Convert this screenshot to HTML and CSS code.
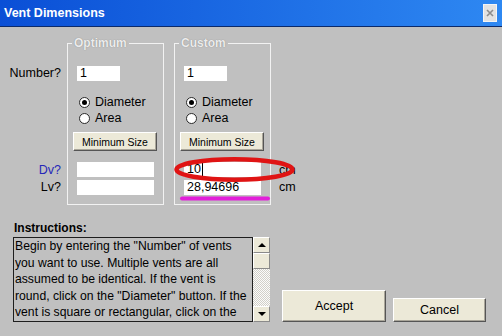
FILE: index.html
```html
<!DOCTYPE html>
<html>
<head>
    <meta charset="UTF-8">
    <title>Vent Dimensions</title>
    <link rel="stylesheet" href="styles.css">
</head>
<body>
    <div class="titlebar">
        <span>Vent Dimensions</span>
        <span class="close">
            <svg width="8" height="8" viewBox="0 0 8 8"><path d="M1 1L7 7M7 1L1 7" stroke="#8c8c8c" stroke-width="1.6"/></svg>
        </span>
    </div>

    <div class="top">
        <fieldset class="group col-opt"><legend>Optimum</legend></fieldset>
        <fieldset class="group col-cus"><legend>Custom</legend></fieldset>

        <div class="lbl row-num">Number?</div>
        <div class="input num col-opt row-num">1</div>
        <div class="input num col-cus row-num">1</div>

        <div class="radio col-opt row-dia"><span class="dot on"></span>Diameter</div>
        <div class="radio col-opt row-area"><span class="dot"></span>Area</div>
        <div class="radio col-cus row-dia"><span class="dot on"></span>Diameter</div>
        <div class="radio col-cus row-area"><span class="dot"></span>Area</div>

        <button class="btn minsize col-opt row-btn">Minimum Size</button>
        <button class="btn minsize col-cus row-btn">Minimum Size</button>

        <div class="lbl blue row-dv">Dv?</div>
        <div class="input wide col-opt row-dv"></div>
        <div class="input wide col-cus row-dv">10<span class="caret"></span></div>
        <div class="unit row-dv">cm</div>

        <div class="lbl row-lv">Lv?</div>
        <div class="input wide col-opt row-lv"></div>
        <div class="input wide col-cus row-lv">28,94696</div>
        <div class="unit row-lv">cm</div>

        <svg class="marks" width="128" height="52" viewBox="0 0 128 52">
            <ellipse cx="62.5" cy="16.5" rx="58" ry="10.2" fill="none" stroke="#e01414" stroke-width="4.5"/>
            <line x1="10" y1="45.5" x2="96" y2="45.5" stroke="#e21fd9" stroke-width="4" stroke-linecap="round"/>
        </svg>
    </div>

    <div class="bottom">
        <div class="instr">
            <h2>Instructions:</h2>
            <div class="textbox">
                <div class="text">Begin by entering the "Number" of vents you want to use. Multiple vents are all assumed to be identical. If the vent is round, click on the "Diameter" button. If the vent is square or rectangular, click on the</div>
                <div class="scroll">
                    <div class="sbtn"><span class="arrow up"></span></div>
                    <div class="sbtn thumb"></div>
                    <div class="track"></div>
                    <div class="sbtn"><span class="arrow down"></span></div>
                </div>
            </div>
        </div>
        <div class="actions">
            <button class="btn accept">Accept</button>
            <button class="btn cancel">Cancel</button>
        </div>
    </div>
</body>
</html>
```

FILE: styles.css
```css
body {
    margin: 0;
    width: 502px;
    height: 336px;
    overflow: hidden;
    background-color: #c0c0c0;
    font-family: "Liberation Sans", Arial, sans-serif;
    font-size: 12.5px;
    color: #000;
}

.titlebar {
    height: 26px;
    border-bottom: 1px solid #0b2a6a;
    background: linear-gradient(to right, #0a4fd6, #2e88f2);
    display: flex;
    align-items: center;
    justify-content: space-between;
    padding: 0 5px 0 4px;
    color: #fff;
    font-weight: bold;
}

.close {
    width: 14px;
    height: 18px;
    box-sizing: border-box;
    background-color: #e2e2e2;
    border: 1px solid #f4f4f4;
    display: flex;
    align-items: center;
    justify-content: center;
}

.top {
    position: relative;
    display: grid;
    grid-template-columns: 67px 97px 10px 97px 1fr;
    grid-template-rows: 28px 16px 13px 16px 16px 6px 19px 10px 17px 18px 9px;
    margin-top: 10px;
}

.col-opt { grid-column: 2; }
.col-cus { grid-column: 4; }
.row-num { grid-row: 2; }
.row-dia { grid-row: 4; }
.row-area { grid-row: 5; }
.row-btn { grid-row: 7; }
.row-dv { grid-row: 9; }
.row-lv { grid-row: 10; }

.group {
    grid-row: 1 / 12;
    margin: 0;
    padding: 0;
    min-width: 0;
    border: 1px solid #f2f2f2;
}

.group legend {
    margin-left: 4px;
    padding: 0 2px;
    font-size: 12px;
    font-weight: bold;
    line-height: 13px;
    color: #ececec;
    text-shadow: 0 0 1px #7a7a7a;
}

.lbl {
    grid-column: 1;
    align-self: center;
    text-align: right;
    padding-right: 6px;
}

.blue {
    color: #2626b8;
}

.input {
    align-self: center;
    height: 15px;
    line-height: 15px;
    box-sizing: border-box;
    padding-left: 3px;
    margin-left: 10px;
    background-color: #fff;
    white-space: nowrap;
}

.input.num { width: 43px; }
.input.wide { width: 77px; }

.caret {
    display: inline-block;
    width: 1px;
    height: 13px;
    margin-left: 1px;
    vertical-align: -3px;
    background-color: #000;
}

.radio {
    display: flex;
    align-items: center;
    gap: 5px;
    margin-left: 12px;
}

.dot {
    position: relative;
    width: 11px;
    height: 11px;
    box-sizing: border-box;
    border: 1px solid #2a2a2a;
    border-radius: 50%;
    background-color: #fff;
}

.dot.on::after {
    content: "";
    position: absolute;
    left: 2px;
    top: 2px;
    width: 5px;
    height: 5px;
    border-radius: 50%;
    background-color: #000;
}

.btn {
    padding: 0;
    font-family: "Liberation Sans", Arial, sans-serif;
    font-size: 12.5px;
    color: #000;
    background-color: #ece9d8;
    border: 1px solid;
    border-color: #fff #555 #555 #fff;
    box-shadow: inset -1px -1px 0 #aaa69a;
}

.minsize {
    width: 84px;
    height: 19px;
    margin-left: 6px;
    font-size: 10.5px;
}

.unit {
    grid-column: 5;
    align-self: center;
    margin-left: 8px;
}

.marks {
    position: absolute;
    left: 172px;
    top: 116px;
}

.bottom {
    display: flex;
    align-items: flex-end;
    padding-left: 13px;
    margin-top: 16px;
}

.instr {
    width: 257px;
}

.instr h2 {
    margin: 0 0 1px 1px;
    font-size: 12px;
    line-height: 15px;
}

.textbox {
    display: flex;
    height: 85px;
}

.text {
    flex: 1;
    border: 1px solid #1e1e1e;
    padding: 0 0 0 1px;
    overflow: hidden;
    font-size: 12.2px;
    line-height: 16.6px;
}

.scroll {
    width: 17px;
    display: flex;
    flex-direction: column;
}

.sbtn {
    height: 16px;
    box-sizing: border-box;
    background-color: #ece9d8;
    border: 1px solid;
    border-color: #fff #8a8a8a #8a8a8a #fff;
    display: flex;
    align-items: center;
    justify-content: center;
}

.track {
    flex: 1;
    background: repeating-conic-gradient(#fbfbfb 0 25%, #d2d0c8 0 50%) 0 0 / 2px 2px;
}

.arrow {
    width: 0;
    height: 0;
    border-left: 4px solid transparent;
    border-right: 4px solid transparent;
}

.arrow.up { border-bottom: 4px solid #000; }
.arrow.down { border-top: 4px solid #000; }

.actions {
    display: flex;
    align-items: flex-end;
    gap: 7px;
    margin-left: 12px;
}

.accept {
    width: 104px;
    height: 32px;
}

.cancel {
    width: 93px;
    height: 24px;
}
```
